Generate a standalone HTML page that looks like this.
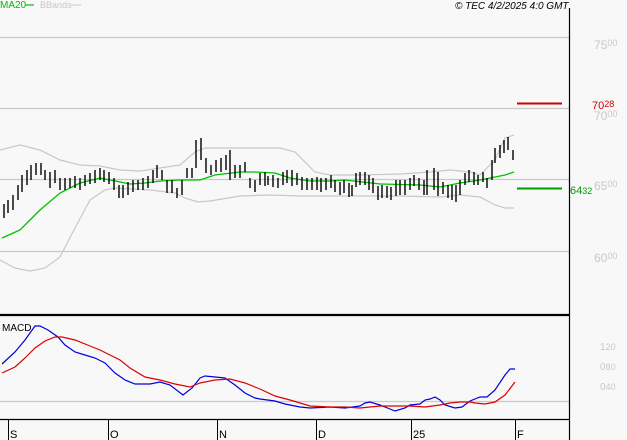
<!DOCTYPE html>
<html><head><meta charset="utf-8"><style>
html,body{margin:0;padding:0;background:#f8f8f8;}
svg{display:block;font-family:"Liberation Sans",sans-serif;}
</style></head><body>
<svg width="627" height="440" viewBox="0 0 627 440" xmlns="http://www.w3.org/2000/svg">
<rect width="627" height="440" fill="#f8f8f8"/>
<g stroke="#c8c8c8" stroke-width="1.2">
<line x1="0" y1="37.5" x2="569" y2="37.5"/>
<line x1="0" y1="108.5" x2="569" y2="108.5"/>
<line x1="0" y1="179.5" x2="569" y2="179.5"/>
<line x1="0" y1="251.5" x2="569" y2="251.5"/>
<line x1="0" y1="401.5" x2="569" y2="401.5"/>
</g>
<g fill="none" stroke="#c8c8c8" stroke-width="1.2">
<polyline points="0,150 20,145 40,150 60,160 80,165 100,166 120,170 140,171 160,168 180,165 195,152 205,148 230,148 260,148 280,148 295,152 315,172 330,175 360,175 400,174 430,172 450,170 470,172 480,175 495,160 505,138 514,135"/>
<polyline points="0,260 15,268 30,271 45,268 60,257 75,228 90,200 105,190 115,188 150,190 175,193 185,198 198,202 210,201 240,196 270,195 300,196 350,196 400,196 440,197 460,195 480,197 495,205 505,208 514,208"/>
</g>
<polyline fill="none" stroke="#00c000" stroke-width="1.3" points="2,238 20,230 40,210 60,193 80,183 100,178 110,180 130,184 145,183 160,181 180,180 200,180 215,175 240,172 255,172 275,173 290,178 310,181 330,181 345,180 380,184 420,185 440,187 460,183 480,180 495,177 505,175 514,172"/>
<g stroke="#000" stroke-width="1.4" fill="none">
<path d="M4 204V218M8 200V213M13 195V210M18 185V200M22 175V192M27 170V185M31 165V180M36 163V175M41 163V175M45 170V180M50 172V188M55 170V183M60 178V190M65 178V190M70 178V188M75 176V188M80 178V190M85 175V186M90 173V184M95 170V183M100 168V180M104 170V182M109 172V184M114 178V190M119 185V198M123 185V198M128 182V195M133 180V192M138 180V190M143 178V190M148 176V188M153 170V183M157 165V178M162 170V180M167 180V193M172 180V193M177 188V198M182 180V195M187 168V178M192 168V178M196 140V168M201 138V160M206 158V173M211 165V175M216 160V172M221 158V172M226 155V170M230 150V180M235 165V178M240 165V178M245 162V172M250 178V188M255 180V192M260 173V185M265 172V186M268 176V185M273 175V187M278 178V188M283 172V185M287 170V183M292 170V186M297 173V185M302 177V190M307 178V190M312 178V190M317 177V190M321 178V192M326 178V190M331 175V188M335 180V192M340 182V195M344 180V193M349 183V197M352 185V196M356 173V187M360 172V185M365 172V185M369 175V190M373 178V193M378 186V200M382 185V198M387 186V198M391 187V200M396 180V196M400 180V195M405 180V195M410 178V190M414 175V186M419 178V190M424 180V195M427 170V195M434 168V190M438 172V196M443 182V194M448 185V198M452 185V200M456 185V202M460 180V195M465 173V185M469 170V182M474 172V185M478 175V185M483 172V182M487 178V188M492 160V180M495 148V163M500 145V158M504 140V153M508 137V150M513 150V160"/>
</g>
<line x1="517" y1="103.5" x2="562" y2="103.5" stroke="#cc0000" stroke-width="2"/>
<line x1="517" y1="188.5" x2="562" y2="188.5" stroke="#009900" stroke-width="2"/>
<g fill="none" stroke-width="1.2">
<polyline stroke="#0000dd" points="2,364 15,352 25,340 35,326 40,326 48,330 58,337 65,345 75,352 85,355 95,358 105,363 115,373 125,380 135,384 150,384 160,382 170,385 183,395 192,388 200,378 205,376 215,377 225,378 235,385 245,393 255,398 260,399 275,401 285,404 300,407 310,408 330,407 345,408 360,406 365,403 370,402 380,405 390,409 395,411 405,408 410,405 420,404 425,400 430,399 435,397 440,400 445,405 455,408 462,407 470,401 480,397 487,397 495,390 505,375 510,369 515,369"/>
<polyline stroke="#dd0000" points="2,373 15,367 25,358 35,348 45,341 55,337 62,337 75,340 90,346 100,350 110,355 120,360 130,368 145,377 160,380 175,384 190,387 200,383 215,380 230,379 245,383 255,387 260,389 275,396 290,400 310,406 330,407 345,407 360,408 370,407 380,406 395,406 410,406 425,407 440,405 450,403 460,402 470,402 475,403 485,404 495,402 505,395 515,382"/>
</g>
<line x1="569.5" y1="8" x2="569.5" y2="440" stroke="#000" stroke-width="1.2"/>
<line x1="0" y1="315" x2="569" y2="315" stroke="#000" stroke-width="2.2"/>
<line x1="0" y1="419.5" x2="569" y2="419.5" stroke="#000" stroke-width="1.2"/>
<g stroke="#000" stroke-width="1">
<line x1="8.5" y1="420" x2="8.5" y2="440"/><line x1="108.5" y1="420" x2="108.5" y2="440"/><line x1="217.5" y1="420" x2="217.5" y2="440"/><line x1="316.5" y1="420" x2="316.5" y2="440"/><line x1="411.5" y1="420" x2="411.5" y2="440"/><line x1="515.5" y1="420" x2="515.5" y2="440"/>
</g>
<g font-size="11" fill="#000">
<text x="10" y="438">S</text><text x="110" y="438">O</text><text x="219" y="438">N</text><text x="318" y="438">D</text><text x="413" y="438">25</text><text x="517" y="438">F</text>
</g>
<text x="2" y="331" font-size="10" fill="#000">MACD</text>
<text x="0" y="8" font-size="10" fill="#00bb00">MA20</text>
<line x1="25" y1="5" x2="34" y2="5" stroke="#00bb00" stroke-width="1.2"/>
<text x="40" y="8" font-size="9" fill="#c8c8c8">BBands</text>
<line x1="71" y1="5" x2="81" y2="5" stroke="#c8c8c8" stroke-width="1"/>
<text x="455" y="9" font-size="10" font-style="italic" fill="#000">© TEC 4/2/2025 4:0 GMT</text>
<g font-size="12" fill="#c8c8c8">
<text x="594" y="49">75<tspan font-size="9" dy="-3">00</tspan></text>
<text x="594" y="120">70<tspan font-size="9" dy="-3">00</tspan></text>
<text x="594" y="190">65<tspan font-size="9" dy="-3">00</tspan></text>
<text x="594" y="262">60<tspan font-size="9" dy="-3">00</tspan></text>
</g>
<g font-size="10" fill="#c8c8c8">
<text x="600" y="350">1<tspan font-size="9">20</tspan></text>
<text x="600" y="370">0<tspan font-size="9">80</tspan></text>
<text x="600" y="390">0<tspan font-size="9">40</tspan></text>
</g>
<text x="592" y="109" font-size="11" fill="#cc0000">70<tspan font-size="9" dy="-2">28</tspan></text>
<text x="570" y="194" font-size="11" fill="#009900">64<tspan font-size="9">32</tspan></text>
</svg>
</body></html>
